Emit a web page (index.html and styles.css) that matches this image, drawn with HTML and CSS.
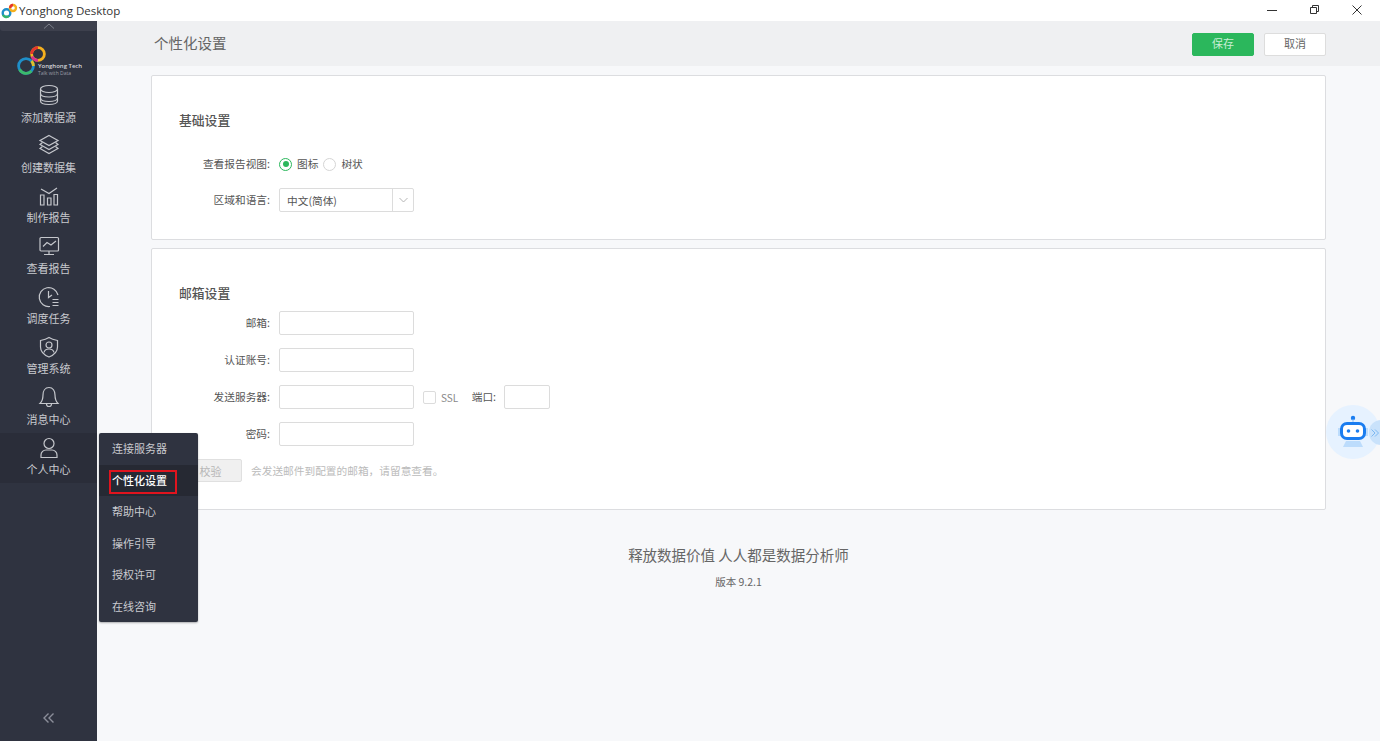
FILE: index.html
```html
<!DOCTYPE html>
<html lang="zh-CN">
<head>
    <meta charset="UTF-8">
    <title>Yonghong Desktop</title>
    <link rel="stylesheet" href="styles.css">
</head>
<body>
    <div class="titlebar">
        <svg class="app-icon" width="17" height="16" viewBox="0 0 17 16" fill="none" stroke-width="2.4">
            <circle cx="5.5" cy="10" r="3.8" stroke="#1f8fc9"/>
            <path d="M2 12 A3.8 3.8 0 0 0 8 13" stroke="#35b56a"/>
            <circle cx="12" cy="5" r="3" stroke="#f5b01e"/>
            <path d="M9.2 5 A3 3 0 0 1 12 2" stroke="#e5352d"/>
        </svg>
        <span class="app-name">Yonghong Desktop</span>
        <div class="win-controls">
            <svg width="12" height="12" viewBox="0 0 12 12" fill="none" stroke="#333"><path d="M2 6.5H12"/></svg>
            <svg width="12" height="12" viewBox="0 0 12 12" fill="none" stroke="#333"><path d="M2.5 3.5H8.5V9.5H2.5Z"/><path d="M4.5 3.5V1.5H10.5V7.5H8.5"/></svg>
            <svg width="12" height="12" viewBox="0 0 12 12" fill="none" stroke="#333"><path d="M1.5 1.5L10.5 10.5M10.5 1.5L1.5 10.5"/></svg>
        </div>
    </div>

    <div class="app">
        <aside class="sidebar">
            <div class="collapse-top">
                <svg width="12" height="6" viewBox="0 0 12 6" fill="none" stroke="#7d808b"><path d="M1 5.5L6 1L11 5.5"/></svg>
            </div>
            <div class="logo">
                <svg class="logo-mark" width="30" height="30" viewBox="0 0 30 30" fill="none" stroke-width="2.8">
                    <circle cx="9" cy="20" r="7.4" stroke="#1f8fc9"/>
                    <path d="M2.6 23.5 A7.4 7.4 0 0 0 14.5 25" stroke="#3cba6b"/>
                    <path d="M14.5 15 A7.4 7.4 0 0 1 16.4 20" stroke="#e0c02a"/>
                    <circle cx="21" cy="8" r="6.4" stroke="#f5b01e"/>
                    <path d="M14.6 8 A6.4 6.4 0 0 1 21 1.6" stroke="#e5352d"/>
                    <path d="M15 10.5 A6.4 6.4 0 0 0 21 14.4" stroke="#d9328f"/>
                </svg>
                <div class="logo-text">
                    <div class="logo-name">Yonghong Tech</div>
                    <div class="logo-sub">Talk with Data</div>
                </div>
            </div>

            <nav class="nav">
                <a class="nav-item">
                    <svg class="nav-icon" viewBox="0 0 22 22"><ellipse cx="11" cy="5" rx="8.5" ry="3.5"/><path d="M2.5 5V17C2.5 19 6 20.5 11 20.5S19.5 19 19.5 17V5"/><path d="M2.5 9.5C2.5 11.5 6 13 11 13S19.5 11.5 19.5 9.5"/><path d="M2.5 14C2.5 16 6 17.5 11 17.5S19.5 16 19.5 14"/></svg>
                    <span>添加数据源</span>
                </a>
                <a class="nav-item">
                    <svg class="nav-icon" viewBox="0 0 22 22"><path d="M11 1.5L20 6.5L11 11.5L2 6.5Z"/><path d="M4.5 8.5L2 10.5L11 15.5L20 10.5L17.5 8.5"/><path d="M4.5 12.5L2 14.5L11 19.5L20 14.5L17.5 12.5"/></svg>
                    <span>创建数据集</span>
                </a>
                <a class="nav-item">
                    <svg class="nav-icon" viewBox="0 0 22 22"><path d="M3 4L11 8.5L19 3"/><path d="M2.5 10H6V20H2.5Z"/><path d="M9.5 13H13V20H9.5Z"/><path d="M16 9.5H19.5V20H16Z"/></svg>
                    <span>制作报告</span>
                </a>
                <a class="nav-item">
                    <svg class="nav-icon" viewBox="0 0 22 22"><path d="M3 2.5H19.5C20 2.5 20.5 3 20.5 3.5V15C20.5 15.5 20 16 19.5 16H3C2.5 16 2 15.5 2 15V3.5C2 3 2.5 2.5 3 2.5Z"/><path d="M5 11.5L9 7.5L13 10L18 6"/><path d="M11 16V19.5M6 19.5H16"/></svg>
                    <span>查看报告</span>
                </a>
                <a class="nav-item">
                    <svg class="nav-icon" viewBox="0 0 22 22"><path d="M20 9A9.5 9.5 0 1 0 12 20.5"/><path d="M10.5 5V11.5L14 9"/><path d="M14.5 13.5H20.5M14.5 16.5H20.5M14.5 19.5H20.5"/></svg>
                    <span>调度任务</span>
                </a>
                <a class="nav-item">
                    <svg class="nav-icon" viewBox="0 0 22 22"><path d="M11 1.5C14 3.5 16.5 4 19.5 4.5V11C19.5 15.5 16 19 11 21C6 19 2.5 15.5 2.5 11V4.5C5.5 4 8 3.5 11 1.5Z"/><circle cx="11" cy="9" r="3"/><path d="M6 16.5C6.5 14 8.5 13 11 13S15.5 14 16 16.5"/></svg>
                    <span>管理系统</span>
                </a>
                <a class="nav-item">
                    <svg class="nav-icon" viewBox="0 0 22 22"><path d="M11 1.5C7 1.5 5 5 5 9C5 13 4 15.5 2 17.5H20C18 15.5 17 13 17 9C17 5 15 1.5 11 1.5Z"/><path d="M8.5 18C8.5 20 9.5 20.5 11 20.5S13.5 20 13.5 18"/></svg>
                    <span>消息中心</span>
                </a>
                <a class="nav-item active">
                    <svg class="nav-icon" viewBox="0 0 22 22"><circle cx="11" cy="6.5" r="5"/><path d="M3 20.5V18C3 15 5.5 13 8 13H14C16.5 13 19 15 19 18V20.5Z"/></svg>
                    <span>个人中心</span>
                </a>
            </nav>

            <div class="collapse-bottom">
                <svg width="12" height="10" viewBox="0 0 12 10" fill="none" stroke="#8b8e99" stroke-width="1.4"><path d="M5.5 .5L1 5L5.5 9.5M10.5 .5L6 5L10.5 9.5"/></svg>
            </div>
        </aside>

        <main class="main">
            <header class="page-header">
                <h1 class="page-title">个性化设置</h1>
                <div class="header-actions">
                    <button class="btn btn-save">保存</button>
                    <button class="btn btn-cancel">取消</button>
                </div>
            </header>

            <div class="content">
                <section class="card">
                    <h2 class="card-title">基础设置</h2>
                    <div class="form card-form-basic">
                        <div class="form-row">
                            <label class="form-label">查看报告视图:</label>
                            <span class="radio checked"></span>
                            <span class="radio-text">图标</span>
                            <span class="radio"></span>
                            <span class="radio-text">树状</span>
                        </div>
                        <div class="form-row">
                            <label class="form-label">区域和语言:</label>
                            <div class="select">
                                <span class="select-value">中文(简体)</span>
                                <span class="select-arrow">
                                    <svg width="9" height="6" viewBox="0 0 9 6" fill="none" stroke="#b5b5b5"><path d="M.5 1L4.5 5L8.5 1"/></svg>
                                </span>
                            </div>
                        </div>
                    </div>
                </section>

                <section class="card">
                    <h2 class="card-title">邮箱设置</h2>
                    <div class="form card-form-mail">
                        <div class="form-row">
                            <label class="form-label">邮箱:</label>
                            <input class="input" type="text">
                        </div>
                        <div class="form-row">
                            <label class="form-label">认证账号:</label>
                            <input class="input" type="text">
                        </div>
                        <div class="form-row">
                            <label class="form-label">发送服务器:</label>
                            <input class="input" type="text">
                            <span class="checkbox"></span>
                            <span class="ssl">SSL</span>
                            <span class="port-label">端口:</span>
                            <input class="input input-port" type="text">
                        </div>
                        <div class="form-row">
                            <label class="form-label">密码:</label>
                            <input class="input" type="text">
                        </div>
                        <div class="verify-row">
                            <button class="btn-verify">校验</button>
                            <span class="hint">会发送邮件到配置的邮箱，请留意查看。</span>
                        </div>
                    </div>
                </section>

                <div class="slogan">释放数据价值 人人都是数据分析师</div>
                <div class="version">版本 9.2.1</div>
            </div>
        </main>
    </div>

    <div class="user-menu">
        <div class="menu-item">连接服务器</div>
        <div class="menu-item current">个性化设置</div>
        <div class="menu-item">帮助中心</div>
        <div class="menu-item">操作引导</div>
        <div class="menu-item">授权许可</div>
        <div class="menu-item">在线咨询</div>
    </div>

    <div class="bot">
        <svg width="32" height="34" viewBox="0 0 32 34" fill="none">
            <circle cx="16" cy="3" r="2.2" fill="#1a7df0"/>
            <path d="M16 4V8" stroke="#8fc2f8"/>
            <rect x="1" y="13" width="3" height="8" fill="#bcdcfc"/>
            <rect x="28" y="13" width="3" height="8" fill="#bcdcfc"/>
            <path d="M9 26H23L26 32H6Z" fill="#bcdcfc"/>
            <rect x="4.5" y="8.5" width="23" height="15" rx="5.5" fill="#fff" stroke="#1a7df0" stroke-width="3"/>
            <circle cx="11.5" cy="16" r="1.8" fill="#1a7df0"/>
            <circle cx="20.5" cy="16" r="1.8" fill="#1a7df0"/>
        </svg>
        <div class="bot-toggle">
            <svg width="8" height="8" viewBox="0 0 8 8" fill="none" stroke="#7db8f2"><path d="M.5 .5L4 4L.5 7.5M4 .5L7.5 4L4 7.5"/></svg>
        </div>
    </div>
</body>
</html>
```

FILE: styles.css
```css
* {
    margin: 0;
    padding: 0;
    box-sizing: border-box;
}

html, body {
    height: 100%;
    overflow: hidden;
}

body {
    font-family: "Noto Sans CJK SC", "Liberation Sans", sans-serif;
    font-size: 11px;
    color: #555;
    background: #f7f8fa;
    display: flex;
    flex-direction: column;
}

.titlebar {
    height: 21px;
    flex-shrink: 0;
    background: #fff;
    display: flex;
    align-items: center;
    padding-left: 1px;
}

.app-icon {
    margin-right: 1px;
}

.app-name {
    font-family: "Open Sans", sans-serif;
    font-size: 11.5px;
    color: #333;
}

.win-controls {
    margin-left: auto;
    display: flex;
    gap: 31px;
    padding-right: 17px;
    margin-top: -1px;
}

.app {
    flex: 1;
    display: flex;
    min-height: 0;
}

/* sidebar */
.sidebar {
    width: 97px;
    flex-shrink: 0;
    background: #2f3340;
    display: flex;
    flex-direction: column;
}

.collapse-top {
    height: 10px;
    background: #3d404d;
    border-radius: 0 0 3px 3px;
    display: flex;
    justify-content: center;
    align-items: flex-start;
    padding-top: 2px;
}

.logo {
    height: 49px;
    display: flex;
    align-items: flex-end;
    padding: 0 0 4px 17px;
}

.logo-mark {
    flex-shrink: 0;
    margin-right: -9px;
}

.logo-text {
    color: #d5d6da;
}

.logo-name {
    font-family: "Open Sans", sans-serif;
    font-size: 6px;
    font-weight: 600;
    line-height: 8px;
    white-space: nowrap;
}

.logo-sub {
    font-family: "Open Sans", sans-serif;
    font-size: 5px;
    line-height: 6px;
    color: #9a9ca5;
    white-space: nowrap;
}

.nav-item {
    height: 50.4px;
    padding-top: 4px;
    display: flex;
    flex-direction: column;
    align-items: center;
    color: #c9cacf;
    line-height: 16px;
}

.nav-item.active {
    background: #2a2d39;
}

.nav-icon {
    width: 22px;
    height: 22px;
    margin-bottom: 2.5px;
    fill: none;
    stroke: #c5c7cc;
    stroke-width: 1.2;
}

.collapse-bottom {
    margin-top: auto;
    height: 46px;
    display: flex;
    justify-content: center;
    padding-top: 18px;
}

/* main area */
.main {
    flex: 1;
    display: flex;
    flex-direction: column;
    min-width: 0;
}

.page-header {
    height: 45px;
    flex-shrink: 0;
    background: #eff0f2;
    display: flex;
    align-items: center;
    justify-content: space-between;
    padding: 0 54px 0 57px;
}

.page-title {
    font-size: 14.5px;
    font-weight: 400;
    color: #666;
    margin-bottom: 2px;
}

.header-actions {
    display: flex;
    gap: 10px;
    margin-top: 1px;
}

.btn {
    width: 62px;
    height: 23px;
    padding-bottom: 2px;
    border-radius: 2px;
    font-family: inherit;
    font-size: 11px;
}

.btn-save {
    background: #2bb75c;
    border: 1px solid #2bb75c;
    color: #c9efd6;
}

.btn-cancel {
    background: #fff;
    border: 1px solid #ddd;
    color: #666;
}

.content {
    flex: 1;
    padding: 9px 54px 0;
}

.card {
    background: #fff;
    border: 1px solid #dcdde0;
    border-radius: 2px;
    padding: 35px 0 27px;
    margin-bottom: 8px;
}

.card-title {
    height: 20px;
    font-size: 12.8px;
    font-weight: 500;
    line-height: 18px;
    color: #555;
    padding-left: 27px;
}

.form {
    display: flex;
    flex-direction: column;
}

.card-form-basic {
    margin-top: 21px;
    gap: 12px;
}

.card-form-mail {
    margin-top: 7px;
    gap: 13px;
}

.form-row {
    height: 24px;
    display: flex;
    align-items: center;
}

.form-label {
    width: 118px;
    margin-right: 9px;
    padding-bottom: 2px;
    text-align: right;
    font-size: 10.7px;
    color: #555;
}

.radio {
    width: 13px;
    height: 13px;
    border: 1px solid #d5d5d5;
    border-radius: 50%;
    background: #fff;
    display: flex;
    align-items: center;
    justify-content: center;
}

.radio.checked {
    border-color: #2bb75c;
}

.radio.checked::after {
    content: "";
    width: 6px;
    height: 6px;
    border-radius: 50%;
    background: #2bb75c;
}

.radio-text {
    margin: 0 5px;
    padding-bottom: 2px;
    font-size: 10.7px;
    color: #555;
}

.select {
    width: 135px;
    height: 24px;
    border: 1px solid #dcdcdc;
    border-radius: 2px;
    display: flex;
    align-items: center;
}

.select-value {
    flex: 1;
    padding-left: 7px;
    font-size: 10.7px;
}

.select-arrow {
    width: 21px;
    height: 100%;
    border-left: 1px solid #dcdcdc;
    display: flex;
    align-items: center;
    justify-content: center;
}

.input {
    width: 135px;
    height: 24px;
    border: 1px solid #dcdcdc;
    border-radius: 2px;
    background: #fff;
}

.input-port {
    width: 46px;
}

.checkbox {
    width: 13px;
    height: 13px;
    margin-left: 9px;
    border: 1px solid #dcdcdc;
    border-radius: 2px;
}

.ssl {
    margin-left: 5px;
    color: #888;
    font-size: 10px;
}

.port-label {
    margin: 0 8px 0 13.5px;
    padding-bottom: 2px;
    font-size: 10.7px;
    color: #555;
}

.verify-row {
    margin-left: 27px;
    height: 23px;
    display: flex;
    align-items: center;
}

.btn-verify {
    width: 63px;
    height: 23px;
    background: #f0f0f0;
    border: 1px solid #e0e0e0;
    border-radius: 2px;
    font-family: inherit;
    font-size: 11px;
    color: #b5b5b5;
}

.hint {
    margin-left: 9px;
    font-size: 10.7px;
    color: #bbb;
}

.slogan {
    margin-top: 34px;
    text-align: center;
    font-size: 14.5px;
    line-height: 22px;
    color: #666;
}

.version {
    margin-top: 8px;
    text-align: center;
    font-size: 10.5px;
    line-height: 16px;
    color: #666;
}

/* popup menu next to the sidebar */
.user-menu {
    position: absolute;
    left: 99px;
    top: 433px;
    width: 99px;
    background: #2f3340;
    border-radius: 2px;
    box-shadow: 0 1px 2px rgba(0, 0, 0, 0.3);
}

.menu-item {
    height: 31.5px;
    line-height: 30px;
    padding-left: 13px;
    color: #c9cacf;
}

.menu-item.current {
    position: relative;
    background: #262933;
    color: #fff;
    font-weight: 500;
}

.menu-item.current::after {
    content: "";
    box-sizing: border-box;
    position: absolute;
    left: 10px;
    top: 5px;
    width: 68px;
    height: 24px;
    border: 2px solid #e0141e;
}

/* floating assistant */
.bot {
    position: absolute;
    left: 1326px;
    top: 405px;
    width: 54px;
    height: 54px;
    border-radius: 50%;
    background: #e6f2ff;
    display: flex;
    justify-content: center;
    padding-top: 10px;
}

.bot-toggle {
    position: absolute;
    right: -1px;
    top: 15px;
    width: 12px;
    height: 25px;
    border-radius: 12px 0 0 12px;
    background: #c9e2fb;
    display: flex;
    align-items: center;
    justify-content: center;
}
```
